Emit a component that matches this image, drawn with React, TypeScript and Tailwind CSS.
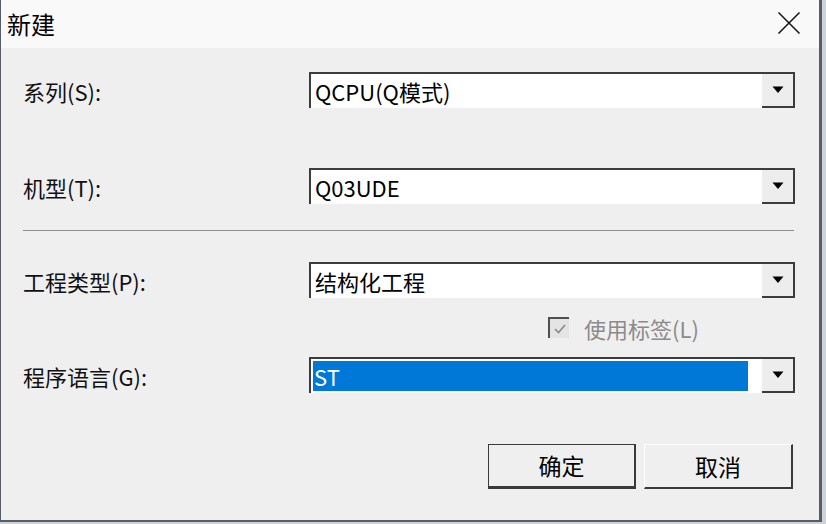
import React from 'react';

const FONT = "font-['Noto_Sans_CJK_SC','Noto_Sans',sans-serif]";

interface ComboProps {
  value: string;
  selected?: boolean;
}

const Combo: React.FC<ComboProps> = ({ value, selected }) => {
  return (
    <div className="flex h-[36px] w-[486px] border-t-2 border-l-2 border-t-[#3c3c3c] border-l-[#3c3c3c] bg-white">
      <div className="flex flex-1 items-stretch py-[2px] pl-[2px] pr-[14px]">
        <div
          className={
            selected
              ? 'flex flex-1 items-center bg-[#0078d7] pl-[1px] text-[22px] leading-none text-white'
              : 'flex flex-1 items-center pl-[2px] text-[22px] leading-none text-black'
          }
        >
          {value}
        </div>
      </div>
      <div className="flex w-[33px] items-center justify-center border-r-2 border-b-2 border-r-[#3c3c3c] border-b-[#3c3c3c] bg-[#ededed]">
        <svg width="12" height="8" viewBox="0 0 12 8">
          <path d="M0.5 0.5 L11.5 0.5 L6 7 Z" fill="#000" />
        </svg>
      </div>
    </div>
  );
};

const Row: React.FC<{ label: string; children: React.ReactNode }> = ({ label, children }) => (
  <div className="flex h-[36px] items-center">
    <div className="w-[286px] pt-[2px] text-[22px] leading-none text-[#111]">{label}</div>
    {children}
  </div>
);

export default function App() {
  return (
    <div className={`h-[524px] w-[826px] overflow-hidden bg-[#cfd2d8] ${FONT}`}>
      <div className="flex h-[522px] w-[822px] flex-col border-l border-r-[3px] border-b-2 border-[#565c68] bg-[#f0eff0]">
        {/* title bar */}
        <div className="flex h-[48px] items-center justify-between bg-[#f9f9fa] pl-[6px] pr-[18px]">
          <span className="text-[24px] leading-none text-black">新建</span>
          <svg width="24" height="24" viewBox="0 0 24 24" className="mb-[2px]">
            <path d="M1.5 1.5 L22.5 22.5 M22.5 1.5 L1.5 22.5" stroke="#111" strokeWidth="1.5" fill="none" />
          </svg>
        </div>

        <div className="flex flex-col pl-[22px] pt-[24px]">
          <Row label="系列(S):">
            <Combo value="QCPU(Q模式)" />
          </Row>
          <div className="mt-[60px]">
            <Row label="机型(T):">
              <Combo value="Q03UDE" />
            </Row>
          </div>

          <div className="mt-[26px] h-px w-[771px] bg-[#8c8c8c]" />

          <div className="mt-[31px]">
            <Row label="工程类型(P):">
              <Combo value="结构化工程" />
            </Row>
          </div>

          <div className="flex h-[59px] items-center pl-[525px]">
            <div className="flex h-[21px] w-[21px] items-center justify-center border-t-2 border-l-2 border-[#505050] bg-[#e4e4e4]">
              <svg width="14" height="12" viewBox="0 0 14 12">
                <path d="M2 6 L5.5 9.5 L12 2" stroke="#8a8a8a" strokeWidth="1.6" fill="none" />
              </svg>
            </div>
            <span className="ml-[15px] text-[22px] leading-none text-[#8b8b8b]">使用标签(L)</span>
          </div>

          <Row label="程序语言(G):">
            <Combo value="ST" selected />
          </Row>

          <div className="mt-[51px] flex gap-[8px] pl-[465px]">
            <button className="flex h-[45px] w-[148px] items-center justify-center border border-b-[3px] border-r-2 border-[#3a3a3a] bg-[#efefef] text-[23px] leading-none text-black">
              确定
            </button>
            <button className="flex h-[45px] w-[149px] items-center justify-center border-t border-l border-t-white border-l-white border-r-2 border-b-2 border-r-[#3a3a3a] border-b-[#3a3a3a] bg-[#efefef] text-[23px] leading-none text-black">
              取消
            </button>
          </div>
        </div>
      </div>
    </div>
  );
}
